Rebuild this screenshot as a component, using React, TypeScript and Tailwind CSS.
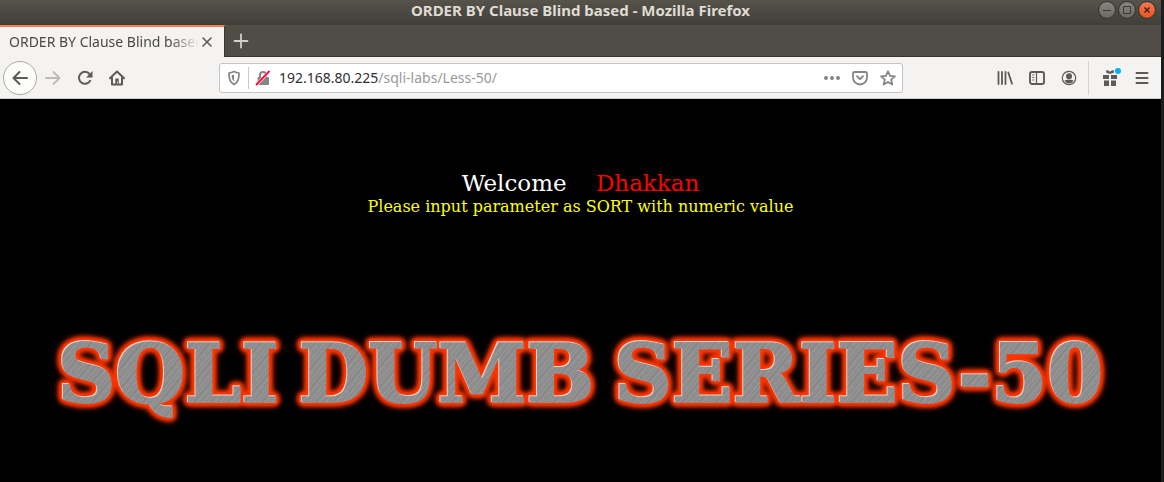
import type { ReactNode } from "react";

function ToolButton({ label, className = "", children }: { label: string; className?: string; children: ReactNode }) {
  return (
    <button aria-label={label} className={`flex h-8 w-8 shrink-0 items-center justify-center text-[#5c5b59] ${className}`}>
      {children}
    </button>
  );
}

function Icon({ children }: { children: ReactNode }) {
  return (
    <svg viewBox="0 0 16 16" className="h-4 w-4" fill="none" stroke="currentColor" strokeWidth="2" strokeLinecap="round" strokeLinejoin="round">
      {children}
    </svg>
  );
}

function TitleBar() {
  return (
    <header className="grid h-[25px] grid-cols-[1fr_auto_1fr] items-start bg-linear-to-b from-[#56534b] to-[#3f3e39]">
      <span />
      <h1 className="text-[15px] leading-5 font-bold text-[#dfdbd2]">ORDER BY Clause Blind based - Mozilla Firefox</h1>
      <div className="flex justify-end gap-1 pt-0.5 pr-1.5">
        <button aria-label="Minimize" className="h-4 w-4 rounded-full bg-linear-to-b from-[#87857e] to-[#6a6861] text-[#3b3a35] outline outline-[#35342f]">
          <svg viewBox="0 0 16 16" fill="none" stroke="currentColor"><path d="M4 8.500h8" /></svg>
        </button>
        <button aria-label="Maximize" className="h-4 w-4 rounded-full bg-linear-to-b from-[#87857e] to-[#6a6861] text-[#3b3a35] outline outline-[#35342f]">
          <svg viewBox="0 0 16 16" fill="none" stroke="currentColor"><path d="M4.500 4.500h7v7h-7z" /></svg>
        </button>
        <button aria-label="Close" className="h-4 w-4 rounded-full bg-linear-to-b from-[#f4784e] to-[#e8531f] text-[#4a2213] outline outline-[#35342f]">
          <svg viewBox="0 0 16 16" fill="none" stroke="currentColor" strokeWidth="1.500"><path d="m5.500 5.500 5 5m0-5-5 5" /></svg>
        </button>
      </div>
    </header>
  );
}

function TabStrip() {
  return (
    <div className="flex h-8 bg-[#504d46]">
      <div className="flex w-[225px] items-center border-t-2 border-r border-t-[#f0814f] border-r-[#38362f] bg-[#f4f3f2] pr-[9px] pl-[9px]">
        <span className="min-w-0 flex-1 overflow-hidden text-[14px] leading-5 whitespace-nowrap text-[#4a4947] mask-r-from-85% mask-r-to-100%">
          ORDER BY Clause Blind based
        </span>
        <button aria-label="Close tab" className="flex h-4 w-4 items-center justify-center text-[#5c5b59]">
          <svg viewBox="0 0 16 16" className="h-4 w-4" fill="none" stroke="currentColor" strokeWidth="1.600" strokeLinecap="round"><path d="m4 4 8 8m0-8-8 8" /></svg>
        </button>
      </div>
      <button aria-label="New tab" className="flex w-8 items-center justify-center border-b border-[#38362f] text-[#d3d0c9]">
        <svg viewBox="0 0 16 16" className="h-4 w-4" fill="none" stroke="currentColor" strokeWidth="1.800" strokeLinecap="round"><path d="M8 1.500v13M1.500 8h13" /></svg>
      </button>
      <div className="flex-1 border-b border-[#38362f]" />
    </div>
  );
}

function AddressBar() {
  return (
    <div className="flex h-[30px] min-w-0 flex-1 items-center rounded-[3px] border border-[#c4c3c1] bg-white px-1.5 text-[#858585]">
      <button aria-label="Tracking protection" className="h-4 w-4">
        <Icon>
          <path d="M8 1.500c-2 1-3.500 1.300-5 1.500 0 6 .8 9 5 11.500C12.200 12 13 9 13 3c-1.500-.2-3-.5-5-1.500Z" strokeWidth="1.700" />
          <path d="M8 4.500v7C6.300 10 5.700 8 5.700 5.200Z" fill="currentColor" stroke="none" />
        </Icon>
      </button>
      <span className="mx-1.5 h-[22px] w-px bg-[#c9c9c9]" />
      <button aria-label="Connection is not secure" className="h-4 w-4">
        <svg viewBox="0 0 16 16" className="h-4 w-4" fill="none">
          <path d="M5 8V5a3 3 0 0 1 6 0v3" stroke="currentColor" strokeWidth="2" />
          <rect x="2.500" y="7" width="11.500" height="8" rx="1" fill="currentColor" />
          <path d="M1 15.200 14.500 1.200" stroke="#fff" strokeWidth="3" />
          <path d="M1 15 14.500 1" stroke="#ff0a45" strokeWidth="1.900" />
        </svg>
      </button>
      <a href="#page" aria-label="Page address" className="ml-2 flex-1 text-[14px] leading-5 text-[#999]">
        <span className="text-[#303030]">192.168.80.225</span>/sqli-labs/Less-50/
      </a>
      <div className="flex items-center gap-3">
        <button aria-label="Page actions">
          <svg viewBox="0 0 16 16" className="h-4 w-4" fill="currentColor"><circle cx="2" cy="8" r="2" /><circle cx="8" cy="8" r="2" /><circle cx="14" cy="8" r="2" /></svg>
        </button>
        <button aria-label="Save to Pocket">
          <Icon>
            <path d="M2.500 2h11c.8 0 1.500.5 1.500 1.300V7.500a7 7 0 0 1-14 0V3.300C1 2.500 1.700 2 2.500 2Z" strokeWidth="1.800" />
            <path d="m5 6.200 3 3 3-3" strokeWidth="1.900" />
          </Icon>
        </button>
        <button aria-label="Bookmark this page">
          <Icon><path d="m8 1.300 2 4.500 4.900.5-3.700 3.300 1.100 4.900L8 12l-4.300 2.500 1.100-4.900L1.100 6.300 6 5.800Z" strokeWidth="1.800" /></Icon>
        </button>
      </div>
    </div>
  );
}

function Toolbar() {
  return (
    <nav aria-label="Browser toolbar" className="flex h-[42px] items-center border-b border-[#cfcecb] bg-[#f4f3f2] px-[3px]">
      <button aria-label="Back" className="flex h-[34px] w-[34px] shrink-0 items-center justify-center rounded-full border border-[#aaa9a7] bg-[#fcfcfb] text-[#5c5b59]">
        <Icon><path d="M15 8H1.500M7.500 2 1.500 8l6 6" /></Icon>
      </button>
      <ToolButton label="Forward" className="text-[#bcbbb9]">
        <Icon><path d="M1 8h13.500M8.500 2l6 6-6 6" strokeWidth="1.800" /></Icon>
      </ToolButton>
      <ToolButton label="Reload">
        <Icon>
          <path d="M13.500 10.200A6 6 0 1 1 12.600 4" strokeLinecap="butt" />
          <path d="M15.500 1v6.500H9Z" fill="currentColor" stroke="none" />
        </Icon>
      </ToolButton>
      <ToolButton label="Home">
        <Icon>
          <path d="M1 8.300 8 1.500l7 6.800" />
          <path d="M3 8v6.500h10V8" />
          <path d="M6.300 14V8.500h3.400V14h-1v-2.500H8V14Z" fill="currentColor" stroke="none" />
        </Icon>
      </ToolButton>
      <div className="flex min-w-0 flex-1 px-[86px]">
        <AddressBar />
      </div>
      <ToolButton label="Library">
        <Icon><path d="M1.500 2v12M5 2v12M8.500 2v12M11.300 2.500 15 13.700" strokeWidth="1.800" /></Icon>
      </ToolButton>
      <ToolButton label="Sidebars">
        <Icon>
          <rect x="1" y="2" width="14" height="12" rx="2" strokeWidth="1.900" />
          <path d="M7.500 2v12M3.300 5h2M3.300 7.500h2M3.300 10h2" strokeWidth="1.200" strokeLinecap="butt" />
        </Icon>
      </ToolButton>
      <ToolButton label="Account">
        <Icon>
          <circle cx="8" cy="8" r="6.700" strokeWidth="1.200" />
          <circle cx="8" cy="6.300" r="3" fill="currentColor" stroke="none" />
          <path d="M3.500 11c.8-1.300 2.500-1.200 4.500-1.200s3.700-.1 4.500 1.200A5.400 5.400 0 0 1 8 13.500 5.400 5.400 0 0 1 3.500 11Z" fill="currentColor" stroke="none" />
        </Icon>
      </ToolButton>
      <span className="mr-[5px] ml-[3px] h-[34px] w-px bg-[#d5d4d2]" />
      <ToolButton label="What's new">
        <svg viewBox="0 0 20 20" className="h-5 w-5 overflow-visible" fill="currentColor">
          <path d="M3 7h6v4H3zM11 7h6v4h-6zM4 12.500h5V18H4zM11 12.500h5V18h-5zM6 2.500c1.500-.8 3 .1 4 1.300 1-1.200 2.500-2.100 4-1.300l-.5 2.500-3.500.8L6.500 5Z" />
          <circle cx="18" cy="3" r="4" fill="#f4f3f2" />
          <circle cx="18" cy="3" r="3" fill="#00b3f4" />
        </svg>
      </ToolButton>
      <ToolButton label="Open menu">
        <Icon><path d="M2.500 3h11M2.500 8h11M2.500 13h11" /></Icon>
      </ToolButton>
    </nav>
  );
}

function MetalWord({ children }: { children: string }) {
  return (
    <span className="[filter:drop-shadow(-1px_-1px_0_#e6d5cc)_drop-shadow(0_0_1px_#ff3600)_drop-shadow(0_0_1px_#ff3600)_drop-shadow(0_0_2px_#ff3600)_drop-shadow(0_0_2px_#ff3600)_drop-shadow(0_0_2px_#ff3600)]">
      <span className="bg-[repeating-linear-gradient(130deg,#828282_0px,#929292_1px,#888_3px,#9c9c9c_4px,#8a8a8a_5px,#949494_8px,#858585_9px,#999_13px)] bg-clip-text text-transparent [-webkit-text-stroke:2px_transparent]">
        {children}
      </span>
    </span>
  );
}

function LessonPage() {
  return (
    <main id="page" className="flex-1 bg-black pt-[70px] text-center font-['DejaVu_Serif',serif]">
      <p className="text-[23px] leading-7 whitespace-pre text-white">
        Welcome{"    "}<span className="text-[#f00]">Dhakkan</span>
      </p>
      <p className="text-[16px] leading-5 text-[#ff0]">Please input parameter as SORT with numeric value</p>
      <h2 className="mt-[111px] flex justify-center gap-5 text-[80px] leading-[92px] font-bold whitespace-nowrap">
        <MetalWord>SQLI</MetalWord>
        <MetalWord>DUMB</MetalWord>
        <MetalWord>SERIES-50</MetalWord>
      </h2>
    </main>
  );
}

export default function App() {
  return (
    <div className="flex min-h-screen bg-[#1d1d1d] pr-[3px] font-['Noto_Sans',sans-serif]">
      <div className="flex min-w-0 flex-1 flex-col">
        <TitleBar />
        <TabStrip />
        <Toolbar />
        <LessonPage />
      </div>
    </div>
  );
}
